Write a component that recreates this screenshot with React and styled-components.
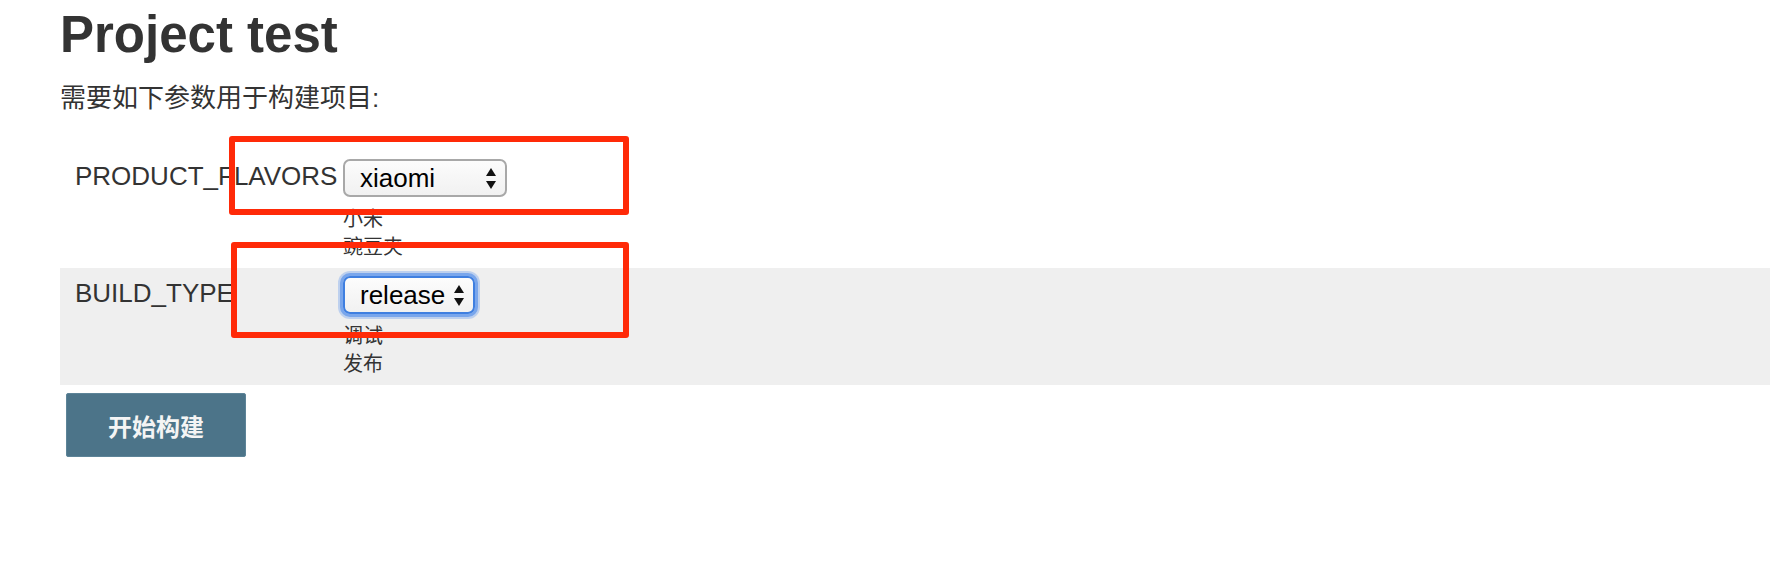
import styled, { createGlobalStyle } from "styled-components";

const GlobalStyle = createGlobalStyle`
  html, body {
    margin: 0;
    padding: 0;
    background: #fff;
  }
  body {
    font-family: "Liberation Sans", "Noto Sans CJK SC", sans-serif;
    color: #333;
  }
`;

const Page = styled.div`
  position: relative;
  min-height: 570px;
  padding: 5px 0 0 60px;
  box-sizing: border-box;
`;

const Title = styled.h1`
  margin: 0;
  font-size: 51px;
  line-height: 60px;
  font-weight: bold;
  color: #333;
`;

const Intro = styled.p`
  margin: 18px 0 0;
  font-size: 26px;
  line-height: 30px;
`;

const ParamTable = styled.div`
  margin-top: 38px;
  display: flex;
  flex-direction: column;
`;

const Row = styled.div`
  display: grid;
  grid-template-columns: 283px 1fr;
  padding: 8px 0 7px;
  background: ${(p) => (p.$shaded ? "#efefef" : "transparent")};
`;

const Label = styled.div`
  padding: 2px 0 0 15px;
  font-size: 26px;
  line-height: 30px;
  color: #333;
`;

const Value = styled.div`
  display: flex;
  flex-direction: column;
  align-items: flex-start;
`;

const Select = styled.div`
  box-sizing: border-box;
  display: flex;
  align-items: center;
  justify-content: space-between;
  width: ${(p) => p.$width}px;
  height: 38px;
  padding: 0 9px 0 15px;
  border: 2px solid ${(p) => (p.$focused ? "#3f7fe0" : "#a8a8a8")};
  border-radius: 7px;
  background: linear-gradient(#fcfcfc, #f1f1f1);
  box-shadow: ${(p) =>
    p.$focused ? "0 0 0 3px #79a6ec, 0 0 0 5px rgba(140, 178, 238, 0.5)" : "none"};
  font-size: 26px;
  line-height: 34px;
  color: #000;
`;

const Arrows = styled.svg`
  flex: none;
  width: 10px;
  height: 21px;
  margin-left: 8px;
`;

const Description = styled.div`
  margin-top: 8px;
  font-size: 20px;
  line-height: 28px;
  color: #333;
`;

const BuildButton = styled.button`
  margin: 8px 0 0 6px;
  width: 180px;
  height: 64px;
  border: 1px solid #5d8498;
  border-radius: 2px;
  background: #4c7489;
  color: #f4f4f4;
  font-family: "Liberation Sans", "Noto Sans CJK SC", sans-serif;
  font-size: 24px;
  font-weight: bold;
  cursor: pointer;
`;

const Annotation = styled.div`
  position: absolute;
  box-sizing: border-box;
  border: 6px solid #ff2a08;
  border-radius: 3px;
  pointer-events: none;
`;

const params = [
  { name: "PRODUCT_FLAVORS", value: "xiaomi", width: 164, options: ["小米", "豌豆夹"] },
  { name: "BUILD_TYPE", value: "release", width: 132, options: ["调试", "发布"], focused: true },
];

const SelectArrows = () => (
  <Arrows viewBox="0 0 10 21">
    <polygon points="0,8 5,0 10,8" fill="#111" />
    <polygon points="0,13 10,13 5,21" fill="#111" />
  </Arrows>
);

const App = () => {
  return (
    <Page>
      <GlobalStyle />
      <Title>Project test</Title>
      <Intro>需要如下参数用于构建项目:</Intro>
      <ParamTable>
        {params.map((p, i) => (
          <Row key={p.name} $shaded={i % 2 === 1}>
            <Label>{p.name}</Label>
            <Value>
              <Select $width={p.width} $focused={p.focused}>
                <span>{p.value}</span>
                <SelectArrows />
              </Select>
              <Description>
                {p.options.map((o) => (
                  <div key={o}>{o}</div>
                ))}
              </Description>
            </Value>
          </Row>
        ))}
      </ParamTable>
      <BuildButton>开始构建</BuildButton>
      <Annotation style={{ left: 229, top: 136, width: 400, height: 79 }} />
      <Annotation style={{ left: 231, top: 242, width: 398, height: 96 }} />
    </Page>
  );
};

export default App;
